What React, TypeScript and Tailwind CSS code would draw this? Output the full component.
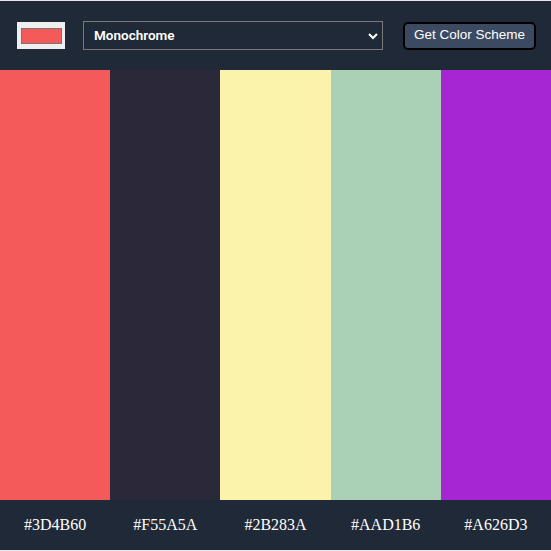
const swatches = [
  { color: "#F55A5A", label: "#3D4B60" },
  { color: "#2B283A", label: "#F55A5A" },
  { color: "#FBF3AB", label: "#2B283A" },
  { color: "#AAD1B6", label: "#AAD1B6" },
  { color: "#A626D3", label: "#A626D3" },
];

export default function App() {
  return (
    <div className="h-[551px] w-[551px] bg-[#e8e8e8] pt-px">
      <main className="flex h-[549px] w-[551px] flex-col bg-[#1f2937] font-['Liberation_Sans',Arial,sans-serif]">
        <header className="flex h-[69px] items-center pl-[17px] pr-[15px]">
          <div className="flex h-[27px] w-[48px] items-center justify-center bg-[#efefef]">
            <div className="h-[16px] w-[41px] border border-[#767676] bg-[#F55A5A]" />
          </div>

          <div className="ml-[18px] flex h-[29px] w-[300px] items-center justify-between border border-[#7a7a7a] pl-[10px] pr-[3px] font-['Roboto',sans-serif] text-[13.5px] font-semibold text-white">
            <span>Monochrome</span>
            <svg width="10" height="8" viewBox="0 0 10 8" className="mr-px">
              <path d="M1 2 L5 6 L9 2" fill="none" stroke="white" strokeWidth="2" />
            </svg>
          </div>

          <button className="ml-auto h-[28px] w-[133px] rounded-[5px] border-2 border-black bg-[#3b4a61] text-[13.5px] text-white">
            Get Color Scheme
          </button>
        </header>

        <section className="flex h-[430px]">
          {swatches.map((s) => (
            <div key={s.label} className="flex-1" style={{ backgroundColor: s.color }} />
          ))}
        </section>

        <footer className="flex h-[50px] items-center">
          {swatches.map((s) => (
            <p key={s.label} className="flex-1 text-center font-['Liberation_Serif',serif] text-base text-white">
              {s.label}
            </p>
          ))}
        </footer>
      </main>
    </div>
  );
}
